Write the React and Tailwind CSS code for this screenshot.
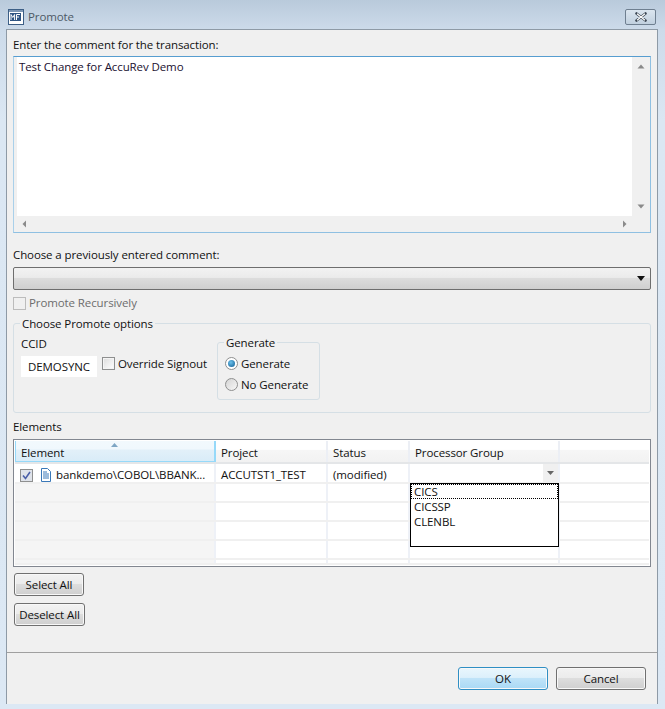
const font = { fontFamily: '"Open Sans", "Noto Sans", sans-serif' };

function Btn({ children, className = "" }) {
  return (
    <button className={`h-[23px] rounded-[3px] border border-[#707070] bg-[linear-gradient(#f2f2f2_0%,#ebebeb_49%,#dddddd_50%,#cfcfcf_100%)] text-[11.5px] leading-[19px] tracking-[-0.1px] text-[#111] shadow-[inset_0_0_0_1px_#f8f8f8] ${className}`}>
      {children}
    </button>
  );
}

function Cell({ w, children, className = "" }) {
  return <div className={`h-full shrink-0 border-r-[2px] border-[#eef1f7] ${w} ${className}`}>{children}</div>;
}

function Head({ w, children, className = "" }) {
  return (
    <div className={`flex h-full shrink-0 items-center border-r-[2px] border-[#eceff5] pl-[5px] pt-[3px] ${w} ${className}`}>
      {children}
    </div>
  );
}

function Row({ children, h = "h-[19px]" }) {
  return <div className={`flex ${h} border-b-[2px] border-[#f0f0f0]`}>{children}</div>;
}

function EmptyRow({ h }) {
  return (
    <Row h={h}>
      <Cell w="w-[201px]" className="bg-[#f5f5f5]" />
      <Cell w="w-[112px]" />
      <Cell w="w-[82px]" />
      <Cell w="w-[150px]" />
      <div className="flex-1" />
    </Row>
  );
}

export default function App() {
  return (
    <div style={font} className="flex h-[709px] w-[665px] flex-col overflow-hidden bg-[linear-gradient(#b9cadb_0px,#cddbea_30px,#dbe7f3_120px,#dce8f4_100%)] text-[11.5px] tracking-[-0.1px] text-[#111]">
      <div className="flex h-[29px] shrink-0 items-center pl-[8px] pr-[9px] pt-[5px]">
        <svg width="16" height="16" viewBox="0 0 16 16">
          <rect x="0.5" y="0.5" width="15" height="15" fill="#fff" stroke="#3d5f86" />
          <rect x="1" y="1" width="14" height="2" fill="#7d97b5" />
          <rect x="2" y="4" width="11" height="8" fill="#2f5583" />
          <path d="M3 11V5.5l1.8 3 1.8-3V11M8.5 11V5.5H12M8.5 8H11" stroke="#fff" strokeWidth="1" fill="none" />
        </svg>
        <span className="ml-[4px] text-[#4e5a66]">Promote</span>
        <div className="ml-auto flex h-[16px] w-[31px] items-center justify-center rounded-[2px] border border-[#6f7f90] bg-[linear-gradient(#dbe5ef,#c1d0df)]">
          <svg width="12" height="10" viewBox="0 0 12 10">
            <path d="M1.5 1.5L10.5 8.5M10.5 1.5L1.5 8.5" stroke="#3b4653" strokeWidth="2.6" strokeLinecap="round" />
            <path d="M2 1.8L10 8.2M10 1.8L2 8.2" stroke="#fff" strokeWidth="1.3" />
          </svg>
        </div>
      </div>

      <div className="ml-[6px] mr-[7px] mb-[5px] flex flex-1 flex-col border border-b-0 border-[#8e9aa6] bg-[#f0f0f0]">
        <div className="flex h-[623px] flex-col border-b border-[#a0a0a0] px-[6px]">
          <div className="mt-[6px] h-[17px] leading-[17px]">Enter the comment for the transaction:</div>

          <div className="mt-[3px] flex h-[177px] border border-[#8fc0e2] border-t-[#569dd0] border-l-[#a9d0ea] bg-[#f0f0f0] pl-[3px] pt-0 pb-[1px] pr-[1px]">
            <div className="flex flex-1 flex-col">
              <div className="h-[159px] bg-white pl-[2px] pt-[1px] leading-[17px] text-[#1a1030]">Test Change for AccuRev Demo</div>
              <div className="flex h-[15px] flex-1 items-center justify-between bg-[#f0f0f0] px-[5px] text-[#666]">
                <svg width="5" height="8" viewBox="0 0 5 8"><path d="M4 0.5V7.5L0.5 4Z" fill="#8a8a8a" /></svg>
                <svg width="5" height="8" viewBox="0 0 5 8"><path d="M1 0.5V7.5L4.5 4Z" fill="#8a8a8a" /></svg>
              </div>
            </div>
            <div className="flex w-[17px] shrink-0 flex-col items-center justify-between bg-[#f0f0f0] pb-[22px] pt-[7px]">
              <svg width="8" height="5" viewBox="0 0 8 5"><path d="M0.5 4.5H7.5L4 0.5Z" fill="#8a8a8a" /></svg>
              <svg width="8" height="5" viewBox="0 0 8 5"><path d="M0.5 0.5H7.5L4 4.5Z" fill="#8a8a8a" /></svg>
            </div>
          </div>

          <div className="mt-[13px] h-[17px] leading-[17px]">Choose a previously entered comment:</div>

          <div className="mt-[4px] flex h-[23px] items-center justify-end rounded-[2px] border border-[#6e6e6e] bg-[linear-gradient(#f2f2f2_0%,#ebebeb_45%,#dcdcdc_50%,#cfcfcf_100%)] pr-[5px]">
            <svg width="8" height="5" viewBox="0 0 8 5"><path d="M0 0H8L4 5Z" fill="#111" /></svg>
          </div>

          <div className="mt-[6px] flex h-[14px] items-center">
            <div className="h-[13px] w-[13px] border border-[#bcbcbc] bg-[#f0f0f0]" />
            <span className="ml-[3px] text-[#6d6d6d]">Promote Recursively</span>
          </div>

          <div className="relative mt-[13px] h-[90px] rounded-[3px] border border-[#d5dfe5] px-[7px]">
            <span className="absolute left-[6px] top-[-9px] bg-[#f0f0f0] px-[2px] leading-[17px]">Choose Promote options</span>
            <div className="mt-[11px] flex">
              <div className="w-[76px] shrink-0">
                <div className="h-[17px] leading-[17px]">CCID</div>
                <div className="mt-[4px] flex h-[21px] w-[76px] items-center justify-center bg-white leading-[17px]">DEMOSYNC</div>
              </div>
              <div className="ml-[5px] mt-[20px] flex h-[17px] w-[110px] shrink-0 items-center self-start">
                <div className="h-[13px] w-[13px] border border-[#8e8f8f] bg-[linear-gradient(135deg,#dcdcdc,#fff)] shadow-[inset_0_0_0_1px_#f4f4f4]" />
                <span className="ml-[3px] whitespace-nowrap">Override Signout</span>
              </div>
              <div className="relative ml-[5px] mt-[7px] h-[58px] w-[103px] shrink-0 rounded-[3px] border border-[#d5dfe5] pl-[7px]">
                <span className="absolute left-[6px] top-[-9px] bg-[#f0f0f0] px-[2px] leading-[17px]">Generate</span>
                <div className="mt-[12px] flex h-[17px] items-center">
                  <div className="flex h-[13px] w-[13px] items-center justify-center rounded-full border border-[#8e8f8f] bg-white">
                    <div className="h-[7px] w-[7px] rounded-full bg-[radial-gradient(circle_at_40%_35%,#6cc0ea,#0f5c92)]" />
                  </div>
                  <span className="ml-[3px]">Generate</span>
                </div>
                <div className="mt-[4px] flex h-[17px] items-center">
                  <div className="h-[13px] w-[13px] rounded-full border border-[#8e8f8f] bg-[linear-gradient(135deg,#d4d4d4,#f8f8f8)]" />
                  <span className="ml-[3px]">No Generate</span>
                </div>
              </div>
            </div>
          </div>

          <div className="mt-[5px] h-[17px] leading-[17px]">Elements</div>

          <div className="relative mt-[4px] h-[128px] border border-[#828790] bg-white p-px">
            <div className="relative flex h-[23px] border-b-[2px] border-[#e4e6e8] bg-[linear-gradient(#fff_0%,#fff_40%,#f6f6f6_45%,#f2f2f2_100%)]">
              <Head w="w-[201px]" className="border-x border-r-[#96d9f9] border-l-[#96d9f9] border-b border-b-[#96d9f9] bg-[linear-gradient(#f2f9fd_0%,#f0f8fd_40%,#e2f0f9_45%,#d9ecf8_100%)]">Element</Head>
              <svg className="absolute left-[96px] top-[2px]" width="7" height="4" viewBox="0 0 7 4"><path d="M0 4H7L3.5 0Z" fill="#7ea6c4" /></svg>
              <Head w="w-[112px]">Project</Head>
              <Head w="w-[82px]">Status</Head>
              <Head w="w-[150px]">Processor Group</Head>
              <div className="flex-1" />
            </div>

            <Row h="h-[20px]">
              <Cell w="w-[201px]" className="flex items-center bg-white pl-[5px] pt-[4px]">
                <div className="flex h-[13px] w-[13px] items-center justify-center border border-[#8e8f8f] bg-[#dfe3ea]">
                  <svg width="9" height="9" viewBox="0 0 9 9"><path d="M1 4.5L3.5 7.5L8 1" stroke="#4a5fa8" strokeWidth="1.6" fill="none" /></svg>
                </div>
                <svg className="ml-[7px]" width="12" height="14" viewBox="0 0 12 14">
                  <path d="M1.5 0.5H7.5L10.5 3.5V13.5H1.5Z" fill="#fff" stroke="#3a78b8" />
                  <path d="M3 4H7M3 6H9M3 8H9M3 10H9" stroke="#3a78b8" />
                </svg>
                <span className="ml-[4px] whitespace-nowrap">bankdemo\COBOL\BBANK...</span>
              </Cell>
              <Cell w="w-[112px]" className="flex items-center pl-[5px] pt-[4px]">ACCUTST1_TEST</Cell>
              <Cell w="w-[82px]" className="flex items-center pl-[5px] pt-[4px]">(modified)</Cell>
              <Cell w="w-[150px]" className="flex justify-end">
                <div className="flex h-[18px] w-[15px] items-center justify-center bg-[#f0f0f0]">
                  <svg width="7" height="4" viewBox="0 0 7 4"><path d="M0 0H7L3.5 4Z" fill="#666" /></svg>
                </div>
              </Cell>
              <div className="flex-1" />
            </Row>
            <EmptyRow />
            <EmptyRow />
            <EmptyRow />
            <EmptyRow />
            <EmptyRow h="h-[5px]" />

            <div className="absolute left-[396px] top-[43px] h-[64px] w-[149px] border border-black bg-white leading-[15px]">
              <div className="h-[15px] border border-dotted border-black pl-[2px] leading-[13px]">CICS</div>
              <div className="pl-[3px]">CICSSP</div>
              <div className="pl-[3px]">CLENBL</div>
            </div>
          </div>

          <Btn className="ml-px mt-[6px] w-[70px] self-start">Select All</Btn>
          <Btn className="ml-px mt-[7px] w-[71px] self-start">Deselect All</Btn>
        </div>

        <div className="flex flex-1 items-start justify-end gap-[8px] pr-[11px] pt-[14px]">
          <Btn className="w-[90px] !border-[#2f8fc4] !bg-[linear-gradient(#e9f6fd_0%,#dcf0fb_45%,#bfe3f8_50%,#a9d9f5_100%)]">OK</Btn>
          <Btn className="w-[90px]">Cancel</Btn>
        </div>
      </div>
    </div>
  );
}
